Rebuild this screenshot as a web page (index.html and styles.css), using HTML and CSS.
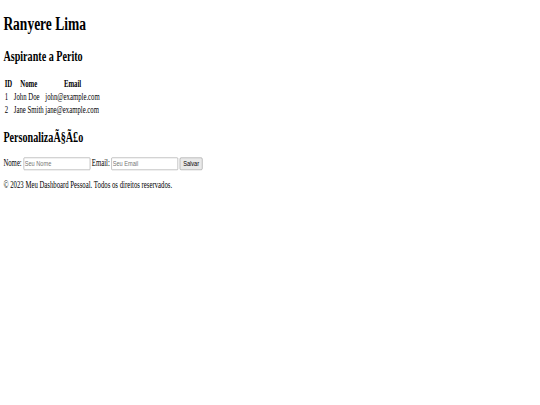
FILE: index.html
```html
<!DOCTYPE html>
<html lang="pt-BR">
<head>
<meta charset="utf-8">
<title>Meu Dashboard Pessoal</title>
<link rel="stylesheet" href="styles.css">
</head>
<body>
<div class="page">
  <div class="content">
    <header>
      <h1>Ranyere Lima</h1>
    </header>
    <section>
      <h2>Aspirante a Perito</h2>
      <table>
        <thead>
          <tr><th>ID</th><th>Nome</th><th>Email</th></tr>
        </thead>
        <tbody>
          <tr><td>1</td><td>John Doe</td><td>john@example.com</td></tr>
          <tr><td>2</td><td>Jane Smith</td><td>jane@example.com</td></tr>
        </tbody>
      </table>
    </section>
    <section>
      <h2>PersonalizaÃ§Ã£o</h2>
      <form>
        <label for="nome">Nome:</label>
        <input type="text" id="nome" placeholder="Seu Nome">
        <label for="email">Email:</label>
        <input type="email" id="email" placeholder="Seu Email">
        <button type="button">Salvar</button>
      </form>
    </section>
    <footer>
      <p>© 2023 Meu Dashboard Pessoal. Todos os direitos reservados.</p>
    </footer>
  </div>
</div>
</body>
</html>
```

FILE: styles.css
```css
html, body {
  margin: 0;
  padding: 0;
  overflow: hidden;
  background: #ffffff;
}

.page {
  display: flow-root;
  width: 1280px;
  height: 674px;
  transform: scale(0.421875, 0.601);
  transform-origin: 0 0;
  font-family: "Liberation Serif", "Times New Roman", serif;
  font-size: 16px;
  color: #000000;
}

.content {
  margin: 8px;
}

h1 {
  font-size: 32px;
  margin: 21.44px 0;
}

h2 {
  font-size: 24px;
  margin: 19.92px 0;
}

table {
  border-spacing: 2px;
}

th, td {
  padding: 1px;
}

form {
  margin: 0 0 16px;
}

input {
  box-sizing: border-box;
  width: 158px;
  height: 21px;
  font-family: "Liberation Sans", Arial, sans-serif;
  font-size: 13.333px;
  padding: 1px 2px;
  border: 1px solid #8a8a8a;
  border-radius: 2px;
  vertical-align: middle;
}

input::placeholder {
  color: #757575;
}

button {
  box-sizing: border-box;
  height: 21px;
  font-family: "Liberation Sans", Arial, sans-serif;
  font-size: 13.333px;
  padding: 1px 7px;
  border: 1px solid #8a8a8a;
  border-radius: 3px;
  background: #e9e9e9;
  color: #000000;
  vertical-align: middle;
}

p {
  margin: 16px 0;
}
```
